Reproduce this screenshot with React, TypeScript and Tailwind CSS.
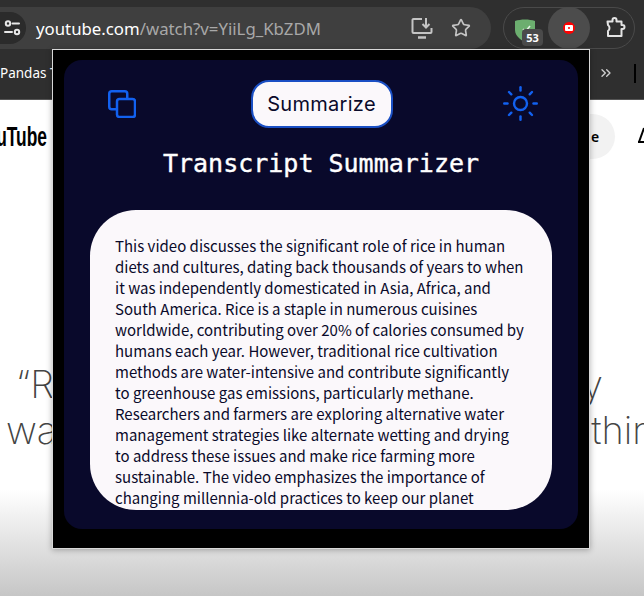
import React from 'react';
import { Star, Sun, ChevronsRight } from 'lucide-react';

const lines = [
  'This video discusses the significant role of rice in human',
  'diets and cultures, dating back thousands of years to when',
  'it was independently domesticated in Asia, Africa, and',
  'South America. Rice is a staple in numerous cuisines',
  'worldwide, contributing over 20% of calories consumed by',
  'humans each year. However, traditional rice cultivation',
  'methods are water-intensive and contribute significantly',
  'to greenhouse gas emissions, particularly methane.',
  'Researchers and farmers are exploring alternative water',
  'management strategies like alternate wetting and drying',
  'to address these issues and make rice farming more',
  'sustainable. The video emphasizes the importance of',
  'changing millennia-old practices to keep our planet',
];

const App = () => {
  return (
    <div className="relative w-[644px] h-[596px] overflow-hidden bg-white font-['Noto_Sans']">
      {/* Toolbar */}
      <div className="h-[50px] bg-[#2f2f2f] flex items-start pt-[7px]">
        <div className="w-[491px] h-[42px] rounded-r-[21px] bg-[#3f3f3f] flex items-center">
          <div className="w-[26px] h-[32px] rounded-r-full bg-[#2b2b2b] flex items-center justify-center shrink-0">
            <svg width="18" height="16" viewBox="0 0 18 16" fill="none" stroke="#e8e8e8" strokeWidth="2" strokeLinecap="round">
              <circle cx="4" cy="3.5" r="2.2" />
              <path d="M8.5 3.5H15" />
              <path d="M1 12H8" />
              <circle cx="13" cy="12" r="2.2" />
            </svg>
          </div>
          <div className="ml-[10px] w-[375px] pt-[1px] text-[16.8px] text-[#a8a8a8] whitespace-nowrap">
            <span className="text-white">youtube.com</span>/watch?v=YiiLg_KbZDM
          </div>
          <svg width="22" height="22" viewBox="0 0 22 22" fill="none" stroke="#c4c4c4" strokeWidth="2">
            <path d="M11 2H2.5a1 1 0 0 0-1 1v12a1 1 0 0 0 1 1h17a1 1 0 0 0 1-1v-4" />
            <path d="M15 1v9M11.5 7l3.5 3.5L18.500 7" />
            <path d="M7 20.500h8" strokeWidth="2.500" />
          </svg>
          <Star className="ml-[18px]" size={20} color="#c4c4c4" strokeWidth={2} />
        </div>
        <div className="ml-[12px] w-[132px] h-[42px] rounded-[21px] border border-[#4a4a4a] relative">
          <svg className="absolute left-[10px] top-[10px]" width="22" height="24" viewBox="0 0 22 24">
            <path d="M1 3C7 1 15 1 21 3V12C21 18 15 22 11 24C7 22 1 18 1 12Z" fill="#6cae6f" />
            <path d="M9 11l2.500 2.500L16 8" fill="none" stroke="#e8f5e8" strokeWidth="1.500" />
          </svg>
          <div className="absolute left-[18px] top-[21px] w-[21px] h-[17px] rounded-[4px] bg-[#4a4a4a] text-white text-[11px] font-bold leading-[17px] text-center">53</div>
          <div className="absolute left-[44px] -top-[1px] w-[42px] h-[42px] rounded-full bg-[#4c4c4c] flex items-center justify-center">
            <div className="w-[12px] h-[12px] rounded-full bg-[#f00] flex items-center justify-center">
              <div className="w-[8px] h-[6px] rounded-[1px] bg-white flex items-center justify-center">
                <div className="w-[2px] h-[2px] rounded-full bg-[#f00]" />
              </div>
            </div>
          </div>
          <svg className="absolute left-[102px] top-[9px]" width="21" height="21" viewBox="0 0 21 21" fill="none" stroke="#e4e4e4" strokeWidth="2" strokeLinejoin="round">
            <path d="M1.500 4.500H6.500V3a2 2 0 0 1 4 0V4.500H15.500V8h1a2 2 0 0 1 0 4h-1V19H2V14a3.500 3.500 0 0 0 1.500-3 3.500 3.500 0 0 0-1.500-3z" />
          </svg>
        </div>
      </div>

      {/* Bookmarks */}
      <div className="h-[50px] bg-[#2f2f2f] border-b border-[#555] flex items-center text-[13.5px] text-white relative">
        <span className="-mt-[2px]">Pandas T</span>
        <ChevronsRight className="absolute left-[598px] top-[15px]" size={16} color="#cfcfcf" strokeWidth={2} />
        <div className="absolute left-[634px] top-[14px] w-[2px] h-[19px] bg-black" />
      </div>

      {/* Page behind */}
      <div className="relative h-[496px] bg-[linear-gradient(to_bottom,#ffffff_0px,#ffffff_390px,#c6c6c6_496px)]">
        <div className="absolute left-0 top-[18px] w-[47px] flex justify-end font-['Liberation_Sans',sans-serif] font-bold text-[28px] leading-[38px] text-black">
          <span className="inline-block scale-x-[0.62] origin-right">uTube</span>
        </div>
        <div className="absolute left-[565px] top-[14px] w-[50px] h-[45px] rounded-full bg-[#f2f2f2] flex items-center pl-[26px] text-[14px] font-semibold text-black">e</div>
        <svg className="absolute left-[638px] top-[27px]" width="8" height="17" viewBox="0 0 8 17" fill="none" stroke="#000" strokeWidth="2">
          <path d="M1 15L6 1" />
          <path d="M0 15H8" />
        </svg>
        <div className="absolute left-0 top-[261px] w-full text-[38px] leading-[46px] font-extralight text-[#444] font-['Inter']">
          <div className="flex justify-between pl-[16px] pr-[41px]">
            <span>“R</span>
            <span>y</span>
          </div>
          <div className="flex justify-between pl-[6px] -mr-[33px]">
            <span>wa</span>
            <span>thing</span>
          </div>
        </div>
      </div>

      {/* Extension popup */}
      <div className="absolute left-[52px] top-[49px] w-[538px] h-[500px] bg-black border border-[#d8d8d8] shadow-[0_1px_6px_rgba(0,0,0,0.3)] pl-[11px] pt-[10px]">
        <div className="w-[514px] h-[469px] rounded-[18px] bg-[#09092b] flex flex-col">
          <div className="flex items-center justify-between pl-[44px] pr-[38px] pt-[20px]">
            <svg width="28" height="28" viewBox="0 0 28 28" fill="none" stroke="#1261f0" strokeWidth="2.500">
              <rect x="1.250" y="1.250" width="18" height="18" rx="2.500" />
              <rect x="9" y="9" width="18" height="18" rx="2.500" fill="#09092b" />
            </svg>
            <button className="ml-[6px] w-[142px] h-[48px] rounded-[18px] border-2 border-[#1a4fc4] bg-[#fbf8fb] text-[#0a0a2a] text-[20px] tracking-[0.3px] font-['Inter']">Summarize</button>
            <Sun className="-mt-[1px]" size={39} color="#1261f0" strokeWidth={1.500} />
          </div>
          <h1 className="mt-[19px] text-center font-['DejaVu_Sans_Mono'] text-[25px] leading-[34px] text-white [-webkit-text-stroke:0.4px_white]">Transcript Summarizer</h1>
          <div className="mt-[29px] ml-[26px] w-[462px] h-[300px] rounded-[46px] bg-[#fbf8fb] overflow-hidden pl-[25px] pt-[25px] text-[#0a0a2a] font-['Noto_Sans_CJK_JP',sans-serif] text-[15px] leading-[21px]">
            {lines.map((line) => (
              <div key={line} className="whitespace-nowrap">{line}</div>
            ))}
          </div>
        </div>
      </div>
    </div>
  );
};

export default App;
